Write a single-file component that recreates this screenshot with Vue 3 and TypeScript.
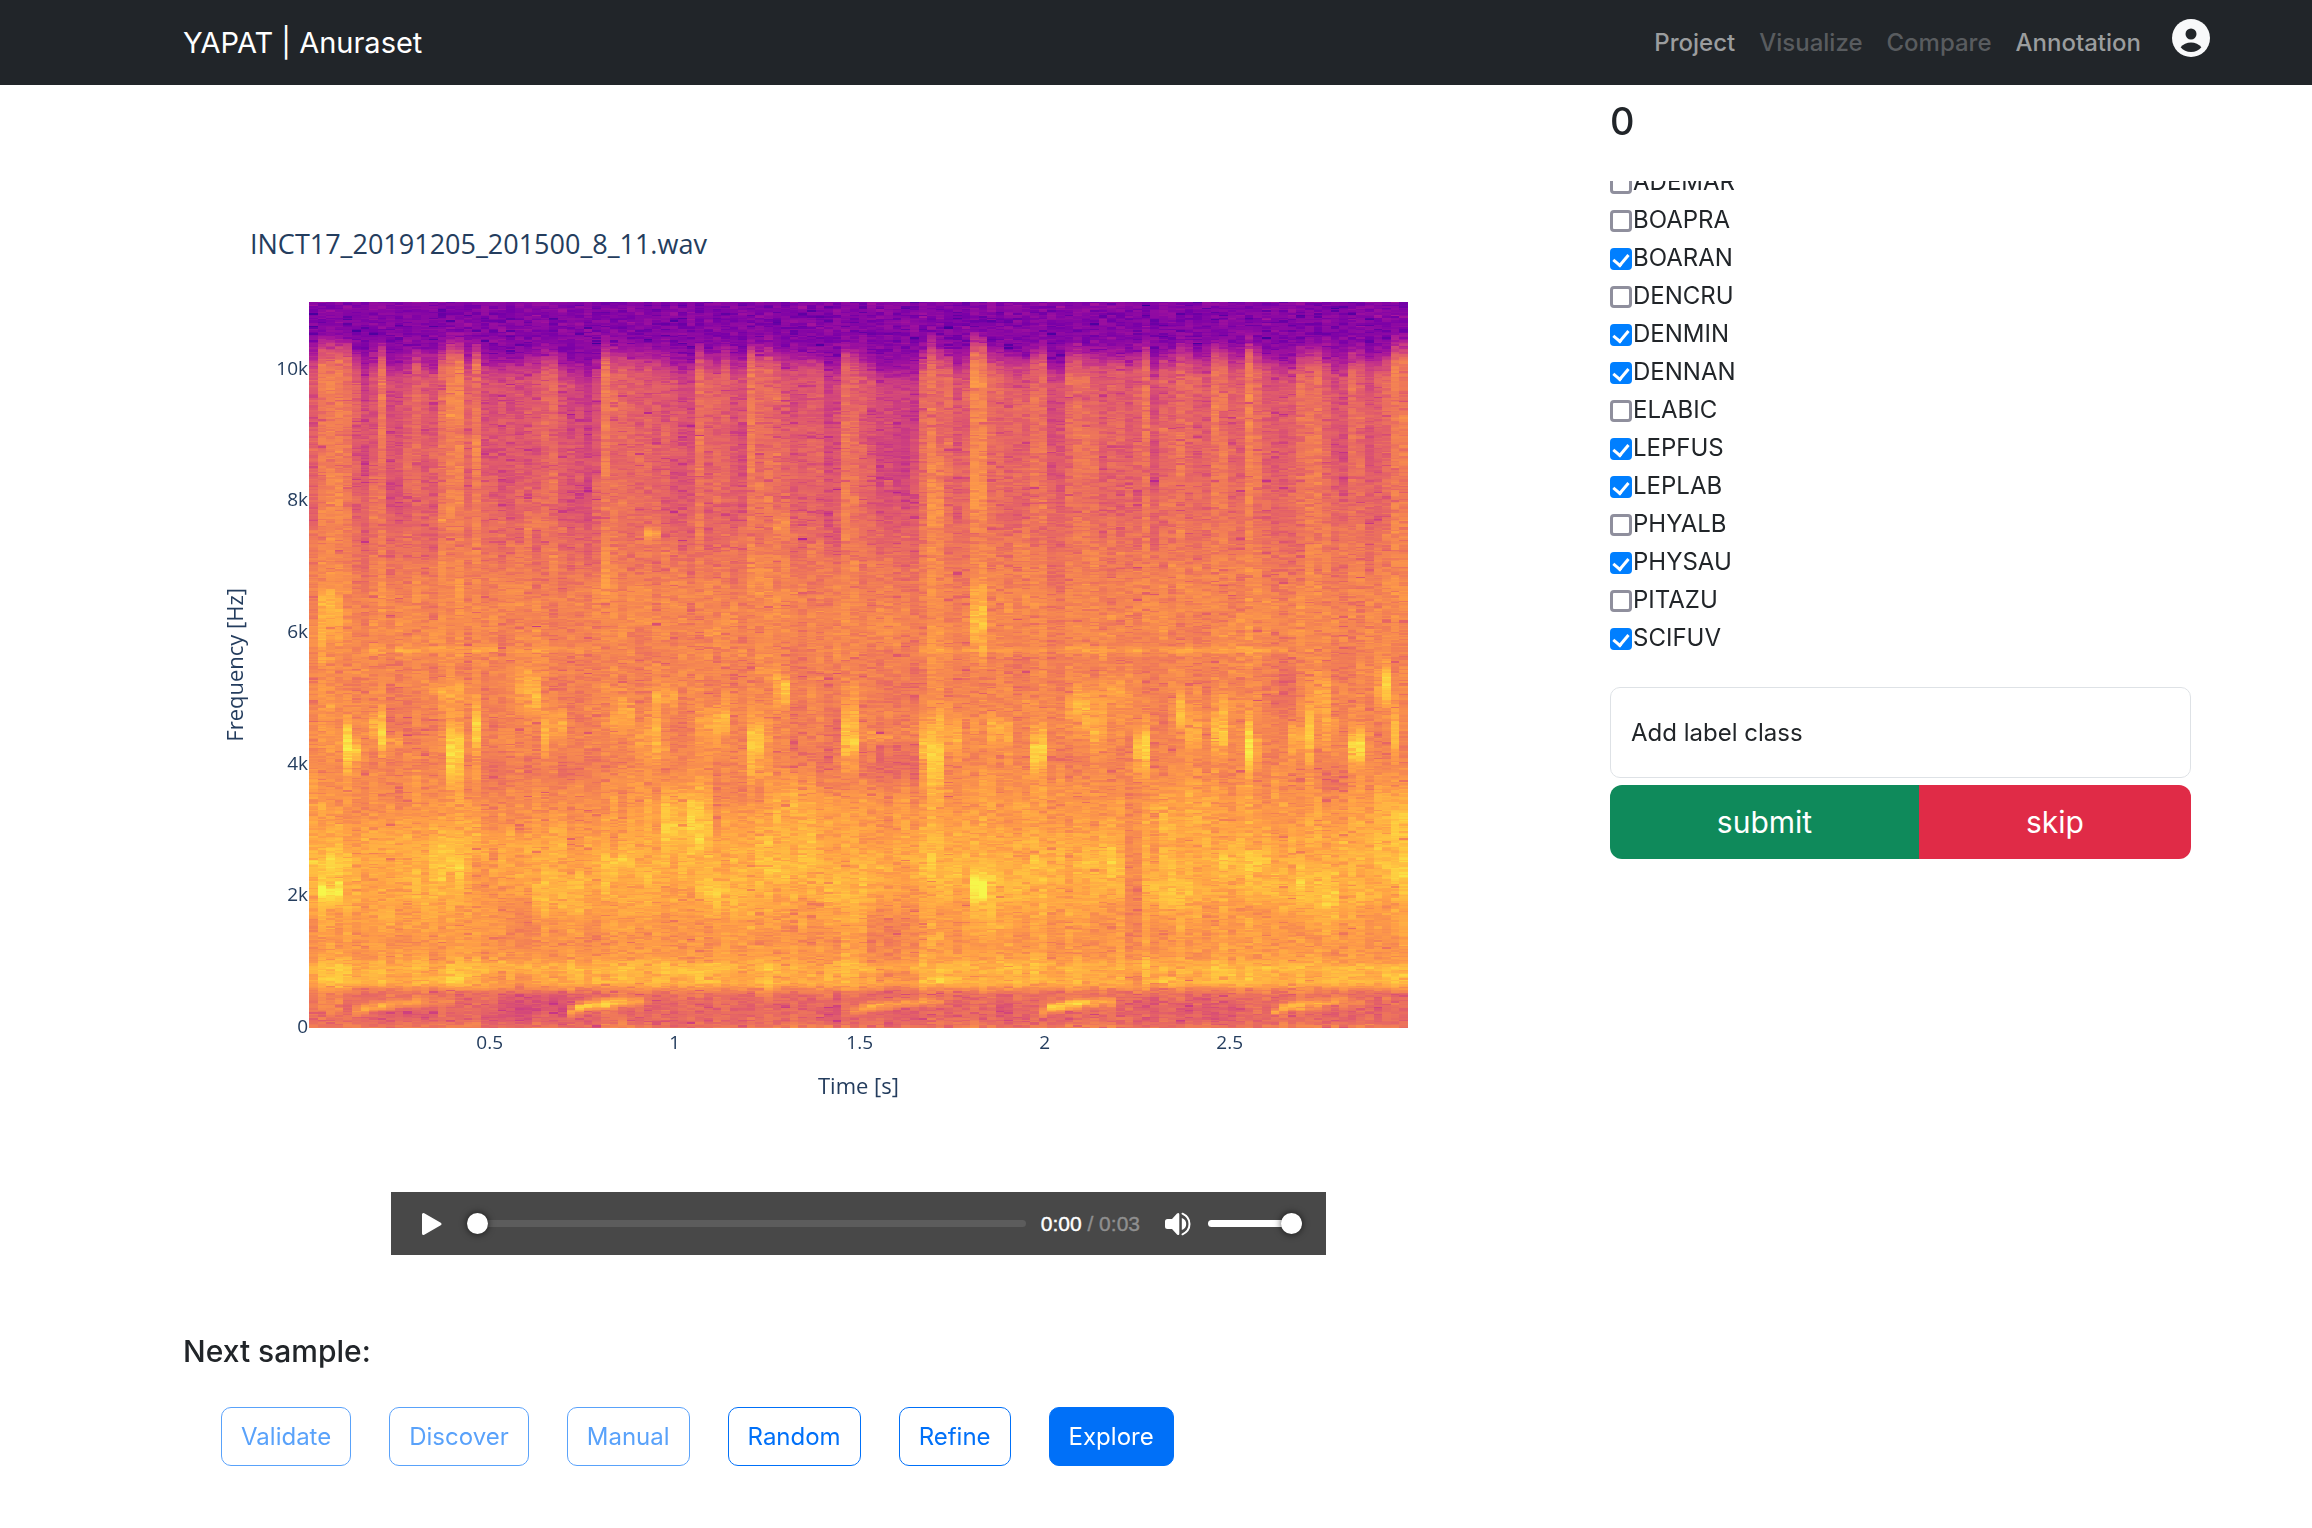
<script setup lang="ts">
import { onMounted, ref } from 'vue'

interface NavItem { label: string; disabled: boolean }
interface LabelClass { name: string; checked: boolean }
interface Mode { label: string; disabled?: boolean; active?: boolean }
interface Tick { text: string; at: number }

const navItems: NavItem[] = [
  { label: 'Project', disabled: false },
  { label: 'Visualize', disabled: true },
  { label: 'Compare', disabled: true },
  { label: 'Annotation', disabled: false },
]

const labels = ref<LabelClass[]>([
  { name: 'ADEMAR', checked: false },
  { name: 'BOAPRA', checked: false },
  { name: 'BOARAN', checked: true },
  { name: 'DENCRU', checked: false },
  { name: 'DENMIN', checked: true },
  { name: 'DENNAN', checked: true },
  { name: 'ELABIC', checked: false },
  { name: 'LEPFUS', checked: true },
  { name: 'LEPLAB', checked: true },
  { name: 'PHYALB', checked: false },
  { name: 'PHYSAU', checked: true },
  { name: 'PITAZU', checked: false },
  { name: 'SCIFUV', checked: true },
])

const modes: Mode[] = [
  { label: 'Validate', disabled: true },
  { label: 'Discover', disabled: true },
  { label: 'Manual', disabled: true },
  { label: 'Random' },
  { label: 'Refine' },
  { label: 'Explore', active: true },
]

const MAX_KHZ = 11.03
const T0 = 0.0115
const T1 = 2.982
const yTicks: Tick[] = [0, 2, 4, 6, 8, 10].map((k) => ({
  text: k ? `${k}k` : '0',
  at: (k / MAX_KHZ) * 100,
}))
const xTicks: Tick[] = [0.5, 1, 1.5, 2, 2.5].map((t) => ({
  text: String(t),
  at: ((t - T0) / (T1 - T0)) * 100,
}))

const position = ref(0)
const volume = ref(100)

/* ---- spectrogram ---- */
const COLS = 128
const ROWS = 513

const scale = [
  [11, 1, 133], [74, 0, 159], [122, 0, 168], [165, 20, 156], [198, 53, 135],
  [223, 88, 109], [241, 124, 86], [255, 159, 70], [255, 201, 63], [246, 246, 74],
]

// mean level against frequency in kHz
const profile: [number, number][] = [
  [0, 0.66], [0.1, 0.6], [0.3, 0.59], [0.5, 0.62], [0.58, 0.71], [0.68, 0.83], [0.78, 0.8], [0.9, 0.84],
  [1.05, 0.77], [1.3, 0.745], [1.6, 0.765], [2, 0.805], [2.5, 0.81], [3, 0.78], [3.5, 0.745],
  [4, 0.7], [4.5, 0.71], [5, 0.7], [5.5, 0.685], [6, 0.7], [6.5, 0.7], [7, 0.665],
  [7.5, 0.625], [8, 0.605], [9, 0.585], [10, 0.56], [12, 0.52],
]

// level of each time frame in the 8–10 kHz band, in hundredths
const bands: number[] = [
  58, 70, 71, 71, 69, 58, 50, 57, 66, 52, 52, 57, 61, 55, 56, 65, 70, 70, 58, 68,
  55, 54, 54, 54, 54, 55, 56, 60, 61, 53, 50, 50, 46, 54, 68, 62, 63, 62, 59, 60,
  58, 57, 53, 52, 52, 65, 57, 58, 61, 54, 53, 68, 65, 66, 61, 57, 56, 56, 57, 56,
  50, 51, 65, 62, 57, 53, 46, 46, 46, 46, 47, 62, 70, 64, 63, 53, 59, 75, 72, 61,
  60, 57, 57, 57, 63, 65, 51, 50, 63, 64, 61, 60, 59, 60, 60, 58, 59, 67, 52, 59,
  60, 66, 62, 59, 57, 66, 65, 59, 59, 71, 62, 56, 55, 54, 57, 62, 64, 65, 61, 55,
  54, 63, 62, 55, 57, 61, 70, 70,
]

// first frame, last frame, centre kHz, spread kHz, gain
const blobs: number[][] = [
  [4, 4, 4.25, 0.4, 0.24], [5, 5, 4.2, 0.15, 0.17], [7, 7, 4.6, 0.2, 0.08], [8, 8, 4.45, 0.4, 0.18],
  [9, 10, 4.35, 0.1, 0.08], [15, 17, 5.05, 0.18, 0.07], [16, 17, 4.2, 0.42, 0.2], [19, 19, 4.5, 0.45, 0.17],
  [14, 15, 5.15, 0.08, 0.08], [24, 24, 5.2, 0.3, 0.09], [25, 26, 5.1, 0.35, 0.14], [27, 27, 4.5, 0.4, 0.14],
  [28, 29, 4.6, 0.3, 0.07], [35, 37, 4.75, 0.35, 0.09], [38, 38, 4.4, 0.2, 0.05], [39, 40, 4.4, 0.35, 0.1],
  [40, 42, 5, 0.15, 0.09], [45, 47, 4.6, 0.25, 0.09], [48, 48, 4.65, 0.35, 0.12], [51, 51, 4.25, 0.45, 0.19],
  [52, 52, 4.35, 0.4, 0.13], [54, 54, 5.2, 0.3, 0.1], [55, 55, 5.15, 0.25, 0.15],
  [62, 63, 4.4, 0.4, 0.16], [64, 67, 4.4, 0.08, 0.08], [71, 71, 4.2, 0.4, 0.12], [72, 73, 4.15, 0.5, 0.19],
  [74, 75, 4.45, 0.4, 0.09], [79, 81, 4.5, 0.35, 0.08], [84, 85, 4.2, 0.3, 0.2], [88, 90, 4.8, 0.3, 0.08],
  [91, 92, 4.5, 0.4, 0.09], [89, 95, 5, 0.35, 0.07], [96, 96, 4.2, 0.35, 0.13], [97, 97, 4.2, 0.35, 0.22],
  [101, 101, 4.85, 0.25, 0.15], [102, 103, 4.45, 0.4, 0.09], [105, 106, 4.5, 0.45, 0.14],
  [109, 109, 4.25, 0.45, 0.22], [110, 110, 4.2, 0.25, 0.1], [114, 115, 4.4, 0.4, 0.07], [116, 116, 4.5, 0.5, 0.15],
  [117, 118, 5, 0.4, 0.07], [121, 122, 4.25, 0.32, 0.21], [124, 125, 5.2, 0.4, 0.07], [125, 125, 5.2, 0.26, 0.14],
  [126, 126, 4.5, 0.4, 0.15], [20, 34, 3.85, 0.35, -0.04], [64, 70, 4, 0.5, -0.07], [111, 114, 5.1, 0.4, -0.06],
  [65, 70, 5.1, 0.3, -0.05], [117, 121, 3.8, 0.25, -0.06], [9, 13, 4.8, 0.4, -0.04], [56, 61, 4.3, 0.6, -0.05],
  [1, 3, 2.05, 0.17, 0.14], [0, 4, 2.5, 0.2, 0.05], [14, 18, 2.5, 0.4, 0.05], [41, 46, 3.15, 0.5, 0.09],
  [39, 46, 3.1, 0.3, 0.03], [34, 37, 2.5, 0.16, 0.06], [45, 50, 2.05, 0.2, 0.05], [25, 25, 2.7, 0.15, 0.06],
  [26, 31, 2.05, 0.25, 0.04], [53, 58, 2.5, 0.3, 0.04], [59, 64, 2.05, 0.3, 0.04], [71, 75, 2.45, 0.3, 0.05],
  [77, 78, 2.1, 0.22, 0.17], [79, 83, 2.1, 0.4, 0.03], [89, 94, 2.5, 0.3, 0.06], [97, 102, 2.05, 0.3, 0.05],
  [99, 104, 3.3, 0.4, 0.05], [106, 111, 2.5, 0.35, 0.05], [115, 119, 2.05, 0.35, 0.07], [124, 127, 3.1, 0.6, 0.06],
  [125, 127, 2.3, 0.3, 0.06], [24, 25, 1.6, 0.8, -0.07], [95, 96, 2.2, 1.2, -0.09], [19, 23, 2.1, 0.5, -0.04],
  [65, 70, 1.4, 0.5, -0.05], [54, 58, 3.3, 0.5, 0.06], [4, 10, 3.5, 0.4, -0.03], [20, 33, 3.2, 0.3, -0.03],
  [47, 52, 3.5, 0.4, -0.05], [14, 17, 0.74, 0.07, 0.06], [0, 8, 0.76, 0.08, 0.03], [19, 25, 0.72, 0.08, -0.06],
  [41, 46, 0.84, 0.07, 0.05], [71, 75, 0.73, 0.06, 0.06], [97, 100, 0.73, 0.06, 0.05], [125, 127, 0.76, 0.08, 0.06],
  [64, 70, 0.75, 0.1, -0.05], [95, 96, 0.75, 0.1, -0.09], [0, 3, 0.35, 0.2, 0.08], [22, 29, 0.35, 0.2, -0.06],
  [7, 33, 5.73, 0.045, 0.07], [71, 84, 5.73, 0.045, 0.07], [85, 113, 5.73, 0.045, 0.08],
  [14, 15, 7.7, 0.08, 0.08], [25, 26, 7.7, 0.16, 0.1], [27, 28, 7.65, 0.05, 0.06], [39, 40, 7.5, 0.08, 0.13],
  [54, 55, 7.65, 0.2, 0.09], [1, 3, 6.2, 0.6, 0.1], [77, 78, 6.25, 0.5, 0.13], [72, 73, 7.9, 0.7, 0.05],
]

// start frame, length, gain of each low sweeping call
const calls: number[][] = [[5, 10, 0.24], [30, 8, 0.36], [63, 10, 0.24], [85, 8, 0.36], [112, 10, 0.25]]

const hash = (a: number, b: number): number => {
  let h = Math.imul(a + 1, 374761393) ^ Math.imul(b + 7, 668265263)
  h = Math.imul(h ^ (h >>> 13), 1274126177)
  h = Math.imul(h ^ (h >>> 15), 2246822519)
  return ((h ^ (h >>> 16)) >>> 0) / 4294967296
}

const smooth = (t: number): number => {
  const c = Math.min(1, Math.max(0, t))
  return c * c * (3 - 2 * c)
}

const mean = (k: number): number => {
  for (let i = 1; i < profile.length; i++) {
    const [k1, v1] = profile[i]
    if (k <= k1) {
      const [k0, v0] = profile[i - 1]
      return v0 + ((v1 - v0) * (k - k0)) / (k1 - k0)
    }
  }
  return 0.5
}

const drift = (c: number, r: number, size: number, seed: number): number => {
  const q = r / size
  const i = Math.floor(q)
  const a = hash(c + seed, i)
  const b = hash(c + seed, i + 1)
  return a + (b - a) * smooth(q - i) - 0.5
}

const level = (c: number, r: number): number => {
  const k = (r / ROWS) * MAX_KHZ
  const weight = 0.12 + 0.68 * smooth((k - 5.8) / 3.2)
  const band = bands[c] / 100 - 0.585
  let v = mean(k) + band * weight
  for (const [a, b, centre, spread, gain] of blobs) {
    const d = (k - centre) / spread
    if (c >= a && c <= b && Math.abs(d) < 3) v += gain * Math.exp(-d * d)
  }
  for (const [start, length, gain] of calls) {
    const p = (c - start) / length
    if (p >= 0 && p <= 1.1) {
      const centre = 0.24 + 0.14 * Math.sqrt(Math.min(p * 1.4, 1))
      const d = (k - centre) / 0.075
      v += gain * (1 - p * p * 0.65) * (0.6 + Math.min(p * 2, 0.4)) * Math.exp(-d * d)
    }
  }
  v += drift(c, r, 12, 300) * 0.06 + drift(c >> 1, r, 34, 700) * 0.04
  const edge = 10.27 + band * 1.6
  const top = 0.255 + drift(c, r, 6, 900) * 0.05
  v = top + (v - top) * smooth((edge + 0.2 - k) / 0.65)
  const e = -Math.log(hash(c, r) + 1e-6) - Math.log(hash(c + 5000, r >> 1) + 1e-6)
  return v + Math.log(e / 2) * 0.04 + 0.01
}

const colour = (v: number): string => {
  const p = Math.min(0.9999, Math.max(0, v)) * (scale.length - 1)
  const i = Math.floor(p)
  const [a, b] = [scale[i], scale[i + 1]]
  return `rgb(${a.map((n, j) => Math.round(n + (b[j] - n) * (p - i))).join(',')})`
}

const spectrogram = ref<HTMLCanvasElement | null>(null)
const list = ref<HTMLElement | null>(null)

onMounted(() => {
  if (list.value) list.value.scrollTop = 18
  const canvas = spectrogram.value
  const ctx = canvas?.getContext('2d')
  if (!canvas || !ctx) return
  canvas.width = canvas.clientWidth
  canvas.height = canvas.clientHeight
  const { width, height } = canvas
  for (let c = 0; c < COLS; c++) {
    const x0 = Math.round((c * width) / COLS)
    const x1 = Math.round(((c + 1) * width) / COLS)
    for (let r = 0; r < ROWS; r++) {
      const y0 = Math.round(height - ((r + 1) * height) / ROWS)
      const y1 = Math.round(height - (r * height) / ROWS)
      ctx.fillStyle = colour(level(c, r))
      ctx.fillRect(x0, y0, x1 - x0, y1 - y0)
    }
  }
})
</script>

<template>
  <header class="navbar">
    <a class="brand" href="#">YAPAT | Anuraset</a>
    <nav class="nav">
      <a
        v-for="item in navItems"
        :key="item.label"
        href="#"
        class="nav-link"
        :class="{ disabled: item.disabled }"
        :aria-disabled="item.disabled"
      >{{ item.label }}</a>
      <button class="account" type="button" aria-label="Account">
        <svg viewBox="0 0 38 38" width="38" height="38" aria-hidden="true">
          <circle cx="19" cy="19" r="19" fill="#f8f9fa" />
          <circle cx="19" cy="15" r="5.5" fill="#212529" />
          <path d="M8.6 28.2C11 25 15 23.4 19 23.4s8 1.600 10.400 4.800C27 31.300 23.200 33 19 33s-8-1.700-10.400-4.800z" fill="#212529" />
        </svg>
      </button>
    </nav>
  </header>

  <main class="page">
    <section class="sample">
      <figure class="chart">
        <figcaption class="chart-title">INCT17_20191205_201500_8_11.wav</figcaption>
        <div class="y-axis">
          <span class="y-title">Frequency [Hz]</span>
          <span v-for="t in yTicks" :key="t.text" class="y-tick" :style="{ bottom: t.at + '%' }">{{ t.text }}</span>
        </div>
        <canvas ref="spectrogram" class="plot"></canvas>
        <div class="x-axis">
          <span v-for="t in xTicks" :key="t.text" class="x-tick" :style="{ left: t.at + '%' }">{{ t.text }}</span>
          <span class="x-title">Time [s]</span>
        </div>
      </figure>

      <div class="player">
        <button class="player-btn play" type="button" aria-label="Play">
          <svg viewBox="0 0 22 24" width="22" height="24" aria-hidden="true">
            <path d="M2.500 2.500v19L19 12z" fill="#fff" stroke="#fff" stroke-width="3" stroke-linejoin="round" />
          </svg>
        </button>
        <input v-model="position" class="range seek" type="range" min="0" max="100" aria-label="Position" />
        <span class="time">0:00 <span class="duration">/ 0:03</span></span>
        <button class="player-btn mute" type="button" aria-label="Mute">
          <svg viewBox="0 0 26 24" width="26" height="24" aria-hidden="true">
            <path d="M2.500 7h4.500L12 1.500Q14.300 0 14.300 2.500v19Q14.300 24 12 22.500L7 17H2.500Q0 17 0 14.500v-5Q0 7 2.500 7z" fill="#fff" />
            <path d="M16.800 6q4.400 1.500 4.400 6t-4.400 6z" fill="#fff" />
            <path d="M17.500 1.700q7 3.300 7 10.300t-7 10.300" fill="none" stroke="#fff" stroke-width="2" stroke-linecap="round" />
          </svg>
        </button>
        <input v-model="volume" class="range volume" type="range" min="0" max="100" aria-label="Volume" />
      </div>

      <h2 class="next-title">Next sample:</h2>
      <div class="modes">
        <button
          v-for="m in modes"
          :key="m.label"
          type="button"
          class="mode"
          :class="{ active: m.active }"
          :disabled="m.disabled"
        >{{ m.label }}</button>
      </div>
    </section>

    <aside class="annotate">
      <h1 class="count">0</h1>
      <div ref="list" class="labels">
        <label v-for="l in labels" :key="l.name" class="label">
          <input v-model="l.checked" class="tick" type="checkbox" />{{ l.name }}
        </label>
      </div>
      <button class="add" type="button">Add label class</button>
      <div class="actions">
        <button class="submit" type="button">submit</button>
        <button class="skip" type="button">skip</button>
      </div>
    </aside>
  </main>
</template>

<style>
body {
  margin: 0;
  background: #fff;
}
</style>

<style scoped>
* {
  box-sizing: border-box;
}
.navbar,
.page,
button {
  font-family: Inter, "Liberation Sans", sans-serif;
  font-size: 24px;
  line-height: 38px;
  color: #212529;
}
button {
  margin: 0;
  padding: 0;
  border: 0;
  background: none;
}
.navbar {
  display: flex;
  align-items: center;
  justify-content: space-between;
  height: 85px;
  padding: 0 102px 0 183px;
  background: #212529;
}
.brand {
  font-size: 29px;
  color: #fff;
  text-decoration: none;
}
.nav {
  display: flex;
  align-items: center;
  gap: 24px;
}
.nav-link {
  font-weight: 500;
  color: #9b9d9e;
  text-decoration: none;
}
.nav-link.disabled {
  color: #595c5f;
}
.account {
  height: 38px;
  margin: 0 0 9px 7px;
}
.account svg {
  display: block;
}

.page {
  display: grid;
  grid-template-columns: minmax(0, 1351fr) minmax(0, 581fr);
  column-gap: 76px;
  padding: 0 121px 0 183px;
}
.chart {
  display: grid;
  grid-template-columns: 126px minmax(0, 1fr) 126px;
  grid-template-rows: 158px 726px 126px;
  margin: 59px 0 0;
  font-family: "Open Sans", "Noto Sans", sans-serif;
  color: #243d5e;
}
.chart-title {
  grid-column: 1 / -1;
  padding: 80px 0 0 67px;
  font-size: 27px;
  line-height: 40px;
}
.y-axis {
  position: relative;
  display: flex;
  align-items: center;
  padding-left: 36px;
}
.y-title {
  writing-mode: vertical-rl;
  transform: rotate(180deg);
  font-size: 22px;
  line-height: 30px;
}
.y-tick {
  position: absolute;
  right: 1px;
  padding-bottom: 4px;
  transform: translateY(50%);
  font-size: 19px;
  line-height: 26px;
}
.plot {
  display: block;
  width: 100%;
  height: 100%;
}
.x-axis {
  position: relative;
  grid-column: 2;
  padding-top: 38px;
  text-align: center;
}
.x-tick {
  position: absolute;
  top: 1px;
  transform: translateX(-50%);
  font-size: 19px;
  line-height: 26px;
}
.x-title {
  font-size: 22px;
  line-height: 30px;
}

.player {
  display: flex;
  align-items: center;
  width: 935px;
  max-width: 100%;
  height: 63px;
  margin: 38px auto 0;
  padding: 0 24px 0 30px;
  background: #484848;
}
.player-btn {
  flex: none;
}
.player-btn svg {
  display: block;
}
.range {
  appearance: none;
  height: 22px;
  margin: 0;
  background: transparent;
}
.range::-webkit-slider-runnable-track {
  height: 7px;
  border-radius: 4px;
  background: #5c5c5c;
}
.range::-webkit-slider-thumb {
  appearance: none;
  width: 21px;
  height: 21px;
  margin-top: -7px;
  border-radius: 50%;
  background: #fff;
  box-shadow: 0 0 6px 1px rgba(0, 0, 0, 0.5);
}
.seek {
  flex: 1;
  min-width: 0;
  margin-left: 24px;
}
.time {
  margin: 0 25px 0 15px;
  font-family: "Liberation Sans", Arial, sans-serif;
  font-size: 21px;
  color: #fff;
  -webkit-text-stroke: 0.4px;
}
.duration {
  color: #8f8f8f;
}
.volume {
  width: 94px;
  margin-left: 17px;
}
.volume::-webkit-slider-runnable-track {
  background: #fff;
}

.next-title {
  margin: 77px 0 0;
  font-size: 30px;
  font-weight: 500;
  line-height: 38px;
}
.modes {
  display: flex;
  gap: 38px;
  padding: 37px 0 62px 38px;
}
.mode {
  height: 59px;
  padding: 0 19px;
  border: 1px solid #0070f8;
  border-radius: 10px;
  color: #0070f8;
}
.mode:disabled {
  opacity: 0.65;
}
.mode.active {
  background: #0070f8;
  color: #fff;
}

.count {
  margin: 13px 0 37px;
  font-size: 38px;
  font-weight: 500;
  line-height: 46px;
}
.labels {
  height: 476px;
  overflow-y: auto;
  scrollbar-width: none;
}
.label {
  display: flex;
  align-items: center;
  height: 38px;
}
.tick {
  appearance: none;
  display: grid;
  place-items: center;
  width: 22px;
  height: 22px;
  margin: 1px 1px 0 0;
  border: 3px solid #8f8f9d;
  border-radius: 4px;
  background: #fff;
}
.tick:checked {
  border-color: #007fff;
  background: #007fff;
}
.tick:checked::before {
  content: "";
  width: 7px;
  height: 12px;
  margin-bottom: 4px;
  border: solid #fff;
  border-width: 0 3px 3px 0;
  transform: rotate(40deg);
}
.add {
  display: block;
  width: 100%;
  height: 91px;
  margin: 30px 0 7px;
  padding: 0 20px;
  border: 1px solid #dee2e6;
  border-radius: 10px;
  text-align: left;
}
.actions {
  display: flex;
  height: 74px;
  border-radius: 12px;
  overflow: hidden;
}
.actions button {
  font-size: 30px;
  color: #fff;
}
.submit {
  flex: 309;
  background: #0f8a5b;
}
.skip {
  flex: 272;
  background: #e02b47;
}
</style>
